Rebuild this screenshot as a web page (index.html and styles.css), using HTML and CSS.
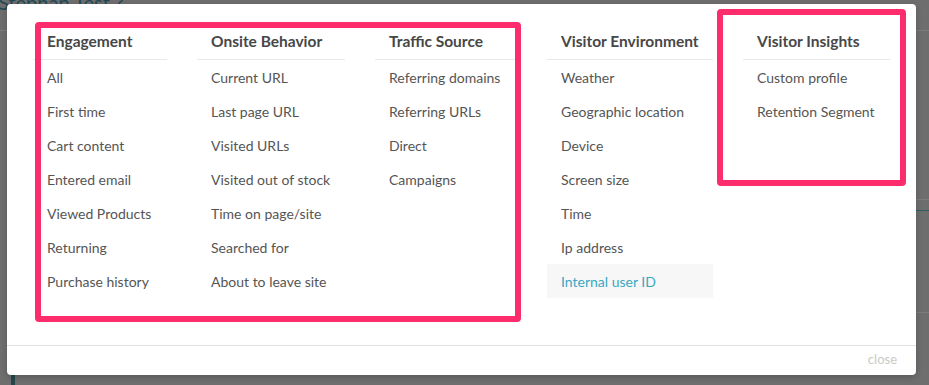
FILE: index.html
```html
<!DOCTYPE html>
<html lang="en">
<head>
    <meta charset="UTF-8">
    <meta name="viewport" content="width=device-width, initial-scale=1.0">
    <title>Segment Conditions</title>
    <link rel="stylesheet" href="styles.css">
</head>
<body>
    <div class="page">
        <div class="page-title">Stephan Test ?</div>
        <div class="page-line line-top"></div>
        <div class="page-line line-right-a"></div>
        <div class="page-line line-right-b"></div>
        <div class="page-line line-right-c"></div>
        <div class="page-tab"></div>
    </div>

    <div class="modal">
        <div class="modal-body">
            <div class="column">
                <div class="column-title">Engagement</div>
                <div class="column-item">All</div>
                <div class="column-item">First time</div>
                <div class="column-item">Cart content</div>
                <div class="column-item">Entered email</div>
                <div class="column-item">Viewed Products</div>
                <div class="column-item">Returning</div>
                <div class="column-item">Purchase history</div>
            </div>
            <div class="column">
                <div class="column-title">Onsite Behavior</div>
                <div class="column-item">Current URL</div>
                <div class="column-item">Last page URL</div>
                <div class="column-item">Visited URLs</div>
                <div class="column-item">Visited out of stock</div>
                <div class="column-item">Time on page/site</div>
                <div class="column-item">Searched for</div>
                <div class="column-item">About to leave site</div>
            </div>
            <div class="column">
                <div class="column-title">Traffic Source</div>
                <div class="column-item">Referring domains</div>
                <div class="column-item">Referring URLs</div>
                <div class="column-item">Direct</div>
                <div class="column-item">Campaigns</div>
            </div>
            <div class="column">
                <div class="column-title">Visitor Environment</div>
                <div class="column-item">Weather</div>
                <div class="column-item">Geographic location</div>
                <div class="column-item">Device</div>
                <div class="column-item">Screen size</div>
                <div class="column-item">Time</div>
                <div class="column-item">Ip address</div>
                <div class="column-item active">Internal user ID</div>
            </div>
            <div class="column">
                <div class="column-title">Visitor Insights</div>
                <div class="column-item">Custom profile</div>
                <div class="column-item">Retention Segment</div>
            </div>
        </div>
        <div class="modal-footer">
            <span class="close-link">close</span>
        </div>

        <!-- annotation boxes drawn over the screenshot -->
        <div class="mark mark-main"></div>
        <div class="mark mark-insights"></div>
    </div>
</body>
</html>
```

FILE: styles.css
```css
body {
    margin: 0;
    padding: 0;
    background-color: #6e6e6e;
    font-family: Lato, "Open Sans", sans-serif;
    width: 929px;
    height: 385px;
    overflow: hidden;
    position: relative;
}
.page {
    position: absolute;
    inset: 0;
}
.page-title {
    position: absolute;
    left: -2px;
    top: -10px;
    font-size: 20px;
    color: #1f4a55;
}
.page-line {
    position: absolute;
    height: 1px;
    background: #7c7c7c;
}
.line-top {
    left: 0;
    right: 0;
    top: 30px;
}
.line-right-a {
    left: 900px;
    right: 0;
    top: 199px;
}
.line-right-b {
    left: 900px;
    right: 0;
    top: 210px;
    background: #2f5e63;
}
.line-right-c {
    left: 900px;
    right: 0;
    top: 312px;
}
.page-tab {
    position: absolute;
    left: 11px;
    top: 370px;
    width: 4px;
    height: 15px;
    background: #24484a;
}
.modal {
    position: absolute;
    left: 7px;
    top: 4px;
    width: 909px;
    height: 371px;
    background: #fff;
    border-radius: 4px;
    box-shadow: 0 2px 6px rgba(0, 0, 0, 0.2);
    display: flex;
    flex-direction: column;
}
.modal-body {
    display: grid;
    grid-template-columns: 134px 148px 142px 166px 147px;
    column-gap: 30px;
    align-items: start;
    padding: 20px 26px 0;
    height: 342px;
    box-sizing: border-box;
    border-bottom: 1px solid #e0e0e0;
}
.column-title {
    padding: 0 14px;
    line-height: 35px;
    font-size: 15.5px;
    font-weight: 700;
    color: #474747;
    border-bottom: 1px solid #e9e9e9;
}
.column-item {
    padding: 0 14px;
    line-height: 35px;
    height: 34px;
    font-size: 14px;
    color: #555;
    white-space: nowrap;
}
.column-item.active {
    background: #f7f7f7;
    color: #3aa7c2;
}
.modal-footer {
    flex: 1;
    display: flex;
    align-items: center;
    justify-content: flex-end;
    padding: 0 19px 4px;
}
.close-link {
    font-size: 13px;
    color: #c9c9c9;
}
.mark {
    position: absolute;
    border: 6px solid #fd2c6d;
    border-radius: 4px;
    box-sizing: border-box;
}
.mark-main {
    left: 28px;
    top: 18px;
    width: 486px;
    height: 300px;
}
.mark-insights {
    left: 710px;
    top: 5px;
    width: 189px;
    height: 177px;
}
```
